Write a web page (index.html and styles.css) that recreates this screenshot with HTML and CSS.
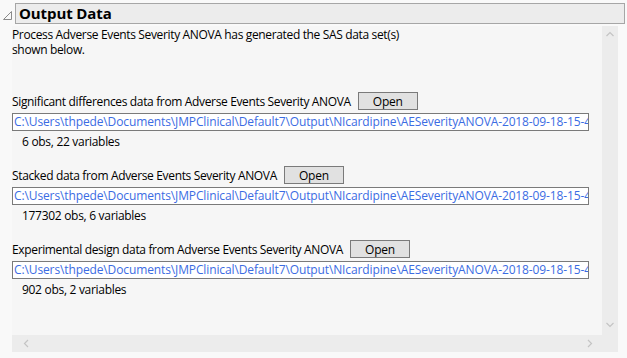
FILE: index.html
```html
<!DOCTYPE html>
<html lang="en">
<head>
    <meta charset="UTF-8">
    <title>Output Data</title>
    <link rel="stylesheet" href="styles.css">
</head>
<body>
    <div class="outline-head">
        <svg class="disclosure" width="9" height="9" viewBox="0 0 9 9">
            <path d="M8.5 0.5 L8.5 8.5 L0.5 8.5 Z" fill="none" stroke="#8a8a8a" stroke-width="1"/>
        </svg>
        <div class="outline-title">Output Data</div>
    </div>

    <div class="scroll-frame">
        <div class="content">
            <p class="intro">Process Adverse Events Severity ANOVA has generated the SAS data set(s)<br>shown below.</p>

            <div class="dataset first">
                <div class="dataset-head">
                    <span>Significant differences data from Adverse Events Severity ANOVA</span>
                    <button class="open-button">Open</button>
                </div>
                <div class="path-box">C:\Users\thpede\Documents\JMPClinical\Default7\Output\NIcardipine\AESeverityANOVA-2018-09-18-15-43-22\aesevanova_sigdiff.sas7bdat</div>
                <div class="stats">6 obs, 22 variables</div>
            </div>

            <div class="dataset">
                <div class="dataset-head">
                    <span>Stacked data from Adverse Events Severity ANOVA</span>
                    <button class="open-button">Open</button>
                </div>
                <div class="path-box">C:\Users\thpede\Documents\JMPClinical\Default7\Output\NIcardipine\AESeverityANOVA-2018-09-18-15-43-22\aesevanova_stacked.sas7bdat</div>
                <div class="stats">177302 obs, 6 variables</div>
            </div>

            <div class="dataset">
                <div class="dataset-head">
                    <span>Experimental design data from Adverse Events Severity ANOVA</span>
                    <button class="open-button">Open</button>
                </div>
                <div class="path-box">C:\Users\thpede\Documents\JMPClinical\Default7\Output\NIcardipine\AESeverityANOVA-2018-09-18-15-43-22\aesevanova_design.sas7bdat</div>
                <div class="stats">902 obs, 2 variables</div>
            </div>
        </div>

        <div class="vscroll">
            <svg width="16" height="16" viewBox="0 0 16 16"><path d="M4.5 10 L8 6.5 L11.5 10" fill="none" stroke="#c4c4c4" stroke-width="1.2"/></svg>
            <svg width="16" height="16" viewBox="0 0 16 16"><path d="M4.5 6 L8 9.5 L11.5 6" fill="none" stroke="#c4c4c4" stroke-width="1.2"/></svg>
        </div>
        <div class="hscroll">
            <svg width="16" height="17" viewBox="0 0 16 17"><path d="M10 5 L6.5 8.5 L10 12" fill="none" stroke="#c4c4c4" stroke-width="1.2"/></svg>
            <svg width="16" height="17" viewBox="0 0 16 17"><path d="M6 5 L9.5 8.5 L6 12" fill="none" stroke="#c4c4c4" stroke-width="1.2"/></svg>
        </div>
        <div class="corner"></div>
    </div>
</body>
</html>
```

FILE: styles.css
```css
body {
    margin: 0;
    background-color: #f9f9f9;
    font-family: 'Open Sans', 'Noto Sans', sans-serif;
    font-size: 12px;
    color: #000;
}

.outline-head {
    display: flex;
    align-items: flex-start;
    padding-top: 3px;
}

.disclosure {
    margin: 8px 3px 0 3px;
}

.outline-title {
    flex: 1;
    height: 19px;
    margin-right: 2px;
    border: 1px solid #a6a6a6;
    background-color: #ececec;
    font-weight: bold;
    font-size: 15px;
    line-height: 19px;
    padding-left: 3px;
    letter-spacing: -0.1px;
}

.scroll-frame {
    display: grid;
    grid-template-columns: 590px 16px;
    grid-template-rows: 309px 17px;
    margin: 2px 0 0 12px;
    width: 606px;
}

.content {
    background-color: #f6f6f6;
    overflow: hidden;
    padding-top: 1px;
}

.intro {
    margin: 0;
    line-height: 15px;
    letter-spacing: -0.35px;
}

.dataset {
    margin-top: 16px;
}

.dataset.first {
    margin-top: 35px;
}

.dataset-head {
    display: flex;
    align-items: center;
    letter-spacing: -0.35px;
}

.open-button {
    width: 60px;
    height: 18px;
    margin-left: 7px;
    padding: 0;
    border: 1px solid #7a7a7a;
    background-color: #e1e1e1;
    font-family: inherit;
    font-size: 12px;
    line-height: 15px;
    letter-spacing: -0.2px;
}

.path-box {
    width: 574px;
    height: 16px;
    margin-top: 3px;
    border: 1px solid #7a7a7a;
    background-color: #fff;
    color: #3b6ce3;
    white-space: nowrap;
    overflow: hidden;
    line-height: 16px;
    padding-left: 1px;
    letter-spacing: -0.12px;
}

.stats {
    padding-left: 10px;
    margin-top: 2px;
    letter-spacing: -0.3px;
}

.vscroll {
    background-color: #ececec;
    display: flex;
    flex-direction: column;
    justify-content: space-between;
    padding: 0 0 2px;
}

.hscroll {
    background-color: #ececec;
    display: flex;
    justify-content: space-between;
    padding: 0 4px 0 6px;
}

.corner {
    background-color: #ececec;
}
```
